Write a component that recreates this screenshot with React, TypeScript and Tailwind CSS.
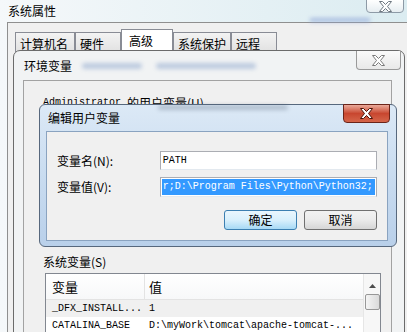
import React from 'react';

function XGlyph({ fill, stroke }: { fill: string; stroke: string }) {
    return (
        <svg width="13" height="11" viewBox="0 0 13 11">
            <polygon
                points="0.5,0.5 3.5,0.5 6.5,3.5 9.5,0.5 12.5,0.5 8.5,5.5 12.5,10.5 9.5,10.5 6.5,7.5 3.5,10.5 0.5,10.5 4.5,5.5"
                fill={fill}
                stroke={stroke}
                strokeWidth="1"
                strokeLinejoin="round"
            />
        </svg>
    );
}

const tabs = [
    { label: '计算机名', w: 'w-[60px]' },
    { label: '硬件', w: 'w-[46px]' },
    { label: '高级', w: 'w-[52px]', active: true },
    { label: '系统保护', w: 'w-[58px]' },
    { label: '远程', w: 'w-[46px]' },
];

const sysVars = [
    { name: '_DFX_INSTALL...', value: '1', shaded: true },
    { name: 'CATALINA_BASE', value: 'D:\\myWork\\tomcat\\apache-tomcat-...' },
];

export default function App() {
    return (
        <div className="relative w-[407px] h-[332px] overflow-hidden bg-gradient-to-r from-[#f5f8fa] to-[#dbecf1] font-['Noto_Sans_CJK_SC',sans-serif] text-[12px] leading-none text-black">
            {/* 系统属性 */}
            <div className="absolute inset-0 flex flex-col">
                <div className="relative h-[22px] flex items-center pl-[8px]">
                    <span>系统属性</span>
                    <div className="absolute left-[310px] top-[18px] w-[60px] h-[4px] bg-[#8fa6d8] blur-[2px] opacity-70" />
                    <div className="absolute right-[3px] -top-px w-[38px] h-[14px] rounded-b-[4px] border border-[#8d9aa6] bg-gradient-to-b from-[#ffffff] to-[#e6edf1] flex items-center justify-center">
                        <XGlyph fill="#ffffff" stroke="#6d7780" />
                    </div>
                </div>
                <div className="flex-1 ml-[7px] border-l border-t border-[#8f8f8f] bg-[#f0f0f0] pt-[6px] pl-[7px]">
                    <div className="flex items-end h-[23px]">
                        {tabs.map((t) =>
                            t.active ? (
                                <div
                                    key={t.label}
                                    className={`${t.w} h-[23px] border-x border-t border-[#898c95] bg-white pl-[7px] pt-[5px] whitespace-nowrap`}
                                >
                                    {t.label}
                                </div>
                            ) : (
                                <div
                                    key={t.label}
                                    className={`${t.w} h-[20px] border-x border-t border-[#898c95] bg-gradient-to-b from-[#f3f3f3] to-[#e1e1e1] pl-[4px] pt-[5px] whitespace-nowrap`}
                                >
                                    {t.label}
                                </div>
                            )
                        )}
                    </div>
                </div>
            </div>

            {/* 环境变量 */}
            <div className="absolute left-[13px] top-[50px] w-[392px] h-[300px] rounded-t-[7px] border border-[#6b6b6b] bg-[#f1f3f4] flex flex-col">
                <div className="relative h-[29px] flex items-center pl-[10px] shrink-0">
                    <span>环境变量</span>
                    <div className="ml-[10px] w-[60px] h-[6px] rounded-full bg-[#6f8fc0] blur-[2px] opacity-40" />
                    <div className="ml-[14px] w-[100px] h-[6px] rounded-full bg-[#6f8fc0] blur-[2px] opacity-40" />
                    <div className="absolute right-[3px] top-0 w-[45px] h-[19px] rounded-b-[4px] border-x border-b border-[#9a9a9a] bg-gradient-to-b from-[#fafafa] to-[#e9e9e9] flex items-center justify-center">
                        <XGlyph fill="#ffffff" stroke="#7a7a7a" />
                    </div>
                </div>
                <div className="flex-1 ml-[9px] mr-[12px] border border-[#a2a2a2] bg-[#f0f0f0] pl-[19px] pt-[15px]">
                    <div className="h-[8px] overflow-hidden">
                        <div className="h-[14px] flex items-center whitespace-nowrap">
                            <span className="font-['Liberation_Mono',monospace] text-[10px]">Administrator&nbsp;</span>
                            <span>的用户变量(U)</span>
                        </div>
                    </div>
                    <div className="h-[151px]" />
                    <div className="h-[14px] flex items-center">系统变量(S)</div>
                    <div className="mt-[4px] ml-[2px] w-[336px] h-[80px] border border-[#828790] bg-white flex">
                        <div className="flex-1 flex flex-col">
                            <div className="h-[26px] flex border-b border-[#e3e3e3] bg-gradient-to-b from-[#ffffff] to-[#f7f8f9] text-[13px]">
                                <div className="w-[99px] pl-[6px] flex items-center border-r border-[#e3e3e3]">变量</div>
                                <div className="pl-[4px] flex items-center">值</div>
                            </div>
                            {sysVars.map((v) => (
                                <div
                                    key={v.name}
                                    className={`h-[17px] flex items-center font-['Liberation_Mono',monospace] text-[10px] ${v.shaded ? 'bg-[#f0f0f0]' : 'bg-white'}`}
                                >
                                    <div className="w-[99px] pl-[6px] whitespace-nowrap">{v.name}</div>
                                    <div className="pl-[4px] whitespace-nowrap">{v.value}</div>
                                </div>
                            ))}
                        </div>
                        <div className="w-[17px] border-l border-[#e6e6e6] bg-[#f7f7f7] flex flex-col items-center">
                            <div className="h-[20px] flex items-end justify-center pb-[6px]">
                                <svg width="7" height="4" viewBox="0 0 7 4">
                                    <polygon points="3.5,0 7,4 0,4" fill="#4d4d4d" />
                                </svg>
                            </div>
                            <div className="w-[15px] h-[16px] rounded-[2px] border border-[#979797] bg-gradient-to-r from-[#f4f4f4] to-[#dadada]" />
                        </div>
                    </div>
                </div>
            </div>

            {/* 编辑用户变量 */}
            <div className="absolute left-[39px] top-[104px] w-[358px] h-[143px] rounded-[6px] border border-[#57687d] bg-gradient-to-b from-[#dce9f6] via-[#c9dcf0] to-[#b9d0ea] flex flex-col">
                <div className="relative h-[26px] flex items-center pl-[8px] shrink-0">
                    <span>编辑用户变量</span>
                    <div className="absolute left-[118px] top-[0px] w-[130px] h-[5px] rounded-full bg-[#4a5a70] blur-[2px] opacity-30" />
                    <div className="absolute left-[303px] -top-px w-[47px] h-[19px] rounded-b-[4px] border border-[#6b2419] bg-gradient-to-b from-[#e9a99a] via-[#c8462f] to-[#d5654a] flex items-center justify-center">
                        <XGlyph fill="#ffffff" stroke="#4a1208" />
                    </div>
                </div>
                <div className="flex-1 ml-[6px] mr-[8px] mb-[5px] border border-[#8aa3c0] bg-[#f0f0f0] pt-[19px] pl-[10px] pr-[10px] flex flex-col">
                    <div className="flex items-center h-[19px]">
                        <div className="w-[103px]">变量名(N):</div>
                        <div className="w-[218px] h-[19px] border border-[#abadb3] border-b-[#e3e9ef] bg-white flex items-center pl-[2px] font-['Liberation_Mono',monospace] text-[10px]">
                            PATH
                        </div>
                    </div>
                    <div className="flex items-center h-[20px] mt-[7px]">
                        <div className="w-[103px]">变量值(V):</div>
                        <div className="w-[218px] h-[20px] border border-[#abadb3] border-b-[#e3e9ef] bg-white p-[1px]">
                            <div className="h-full bg-[#3399ff] text-white flex items-center whitespace-nowrap font-['Liberation_Mono',monospace] text-[10px]">
                                <span className="pl-[1px]">r;D:\Program Files\Python\Python32;</span>
                            </div>
                        </div>
                    </div>
                    <div className="mt-[13px] flex justify-end gap-[7px]">
                        <div className="w-[73px] h-[20px] rounded-[3px] border border-[#3c7fb1] bg-gradient-to-b from-[#eaf6fd] via-[#d9f0fc] to-[#a7d9f5] flex items-center justify-center">
                            确定
                        </div>
                        <div className="w-[73px] h-[20px] rounded-[3px] border border-[#707070] bg-gradient-to-b from-[#f2f2f2] via-[#ebebeb] to-[#d6d6d6] flex items-center justify-center">
                            取消
                        </div>
                    </div>
                </div>
            </div>
        </div>
    );
}
